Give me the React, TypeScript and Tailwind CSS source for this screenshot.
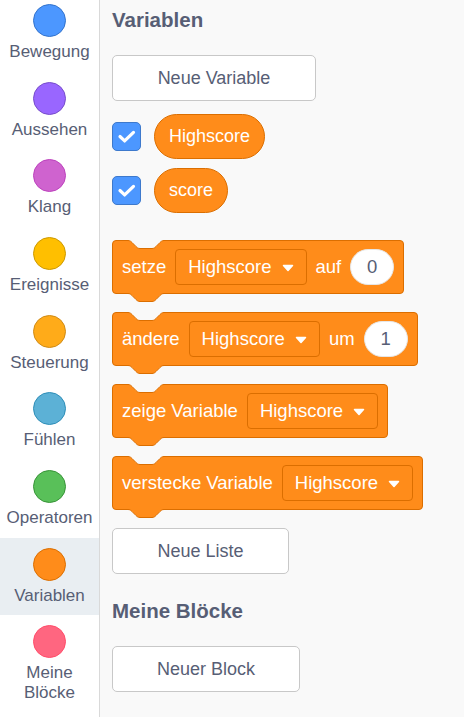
import React from "react";

const FONT = { fontFamily: '"Liberation Sans", Helvetica, Arial, sans-serif' };

const categories = [
  { label: "Bewegung", bg: "bg-[#4c97ff]", border: "border-[#3373cc]" },
  { label: "Aussehen", bg: "bg-[#9966ff]", border: "border-[#774dcb]" },
  { label: "Klang", bg: "bg-[#cf63cf]", border: "border-[#bd42bd]" },
  { label: "Ereignisse", bg: "bg-[#ffbf00]", border: "border-[#cc9900]" },
  { label: "Steuerung", bg: "bg-[#ffab19]", border: "border-[#cf8b17]" },
  { label: "Fühlen", bg: "bg-[#5cb1d6]", border: "border-[#2e8eb8]" },
  { label: "Operatoren", bg: "bg-[#59c059]", border: "border-[#389438]" },
  { label: "Variablen", bg: "bg-[#ff8c1a]", border: "border-[#db6e00]", selected: true },
  { label: "Meine\nBlöcke", bg: "bg-[#ff6680]", border: "border-[#ff4d6a]" },
];

const NOTCH = "c2,0 3,1 4,2 l4,4 c1,1 2,2 4,2 h12 c2,0 3,-1 4,-2 l4,-4 c1,-1 2,-2 4,-2";

function Caret() {
  return (
    <svg width="12" height="8" viewBox="0 0 12 8" className="mt-[2px]">
      <path d="M1.5,1.5 L10.5,1.5 L6,6.5 Z" fill="white" stroke="white" strokeWidth="1.5" strokeLinejoin="round" />
    </svg>
  );
}

function Dropdown() {
  return (
    <div className="flex h-[36px] items-center gap-[10px] rounded-[4px] border border-[#db6e00] bg-[#ff8c1a] pl-[12px] pr-[12px]">
      <span>Highscore</span>
      <Caret />
    </div>
  );
}

function Oval({ v }: { v: string }) {
  return (
    <div className="flex h-[36px] w-[44px] items-center justify-center rounded-full border border-[#e6e6e6] bg-white text-[#575e75]">
      {v}
    </div>
  );
}

function Block({ children }: { children: React.ReactNode }) {
  return (
    <div className="relative flex h-[54px] w-fit items-center gap-[9px] rounded-[4px] border border-[#db6e00] bg-[#ff8c1a] pl-[9px] pr-[9px] text-[18.5px] text-white">
      <svg className="absolute left-[15px] top-[-1px]" width="36" height="10" viewBox="0 0 36 10">
        <path d={`M0,0 L0,0.5 ${NOTCH} L36,0 Z`} fill="#f9f9f9" />
        <path d={`M0,0.5 ${NOTCH}`} fill="none" stroke="#db6e00" strokeWidth="1" />
      </svg>
      <svg className="absolute left-[15px] top-full z-10" width="36" height="10" viewBox="0 0 36 10">
        <path d={`M0,0 L0,0.5 ${NOTCH} L36,0 Z`} fill="#ff8c1a" />
        <path d={`M0,0.5 ${NOTCH}`} fill="none" stroke="#db6e00" strokeWidth="1" />
      </svg>
      {children}
    </div>
  );
}

function Check() {
  return (
    <div className="flex h-[29px] w-[29px] items-center justify-center rounded-[5px] border border-[#3d79cc] bg-[#4c97ff]">
      <svg width="29" height="29" viewBox="0 0 29 29">
        <path d="M7.5,14.5 L12.5,19.3 L22,10" fill="none" stroke="white" strokeWidth="3.4" strokeLinecap="round" strokeLinejoin="round" />
      </svg>
    </div>
  );
}

function Pill({ label }: { label: string }) {
  return (
    <div className="flex h-[45px] items-center rounded-full border border-[#db6e00] bg-[#ff8c1a] px-[14px] text-[18px] text-white">
      {label}
    </div>
  );
}

function Button({ label, w }: { label: string; w: string }) {
  return (
    <div className={`flex h-[46px] items-center justify-center rounded-[5px] border border-[#c8c8c8] bg-white text-[18px] text-[#575e75] ${w}`}>
      {label}
    </div>
  );
}

export default function App() {
  return (
    <div className="flex h-[717px] w-[464px] overflow-hidden bg-[#f9f9f9]" style={FONT}>
      <div className="h-full w-[100px] shrink-0 overflow-hidden border-r border-[#d9d9d9] bg-white">
        <div className="mt-[-6px] flex flex-col">
          {categories.map((c) => (
            <div
              key={c.label}
              className={`flex h-[77.67px] shrink-0 flex-col items-center pt-[10px] ${c.selected ? "bg-[#e9eef2]" : ""}`}
            >
              <div className={`h-[33px] w-[33px] shrink-0 rounded-full border ${c.bg} ${c.border}`} />
              <div className="mt-[5px] whitespace-pre text-center text-[17px] leading-[20px] text-[#575e75]">
                {c.label}
              </div>
            </div>
          ))}
        </div>
      </div>
      <div className="flex flex-1 flex-col pl-[12px]">
        <div className="mt-[8px] text-[20.5px] font-bold leading-[24px] text-[#575e75]">Variablen</div>
        <div className="mt-[23px]">
          <Button label="Neue Variable" w="w-[204px]" />
        </div>
        <div className="mt-[13px] flex items-center gap-[13px]">
          <Check />
          <Pill label="Highscore" />
        </div>
        <div className="mt-[9px] flex items-center gap-[13px]">
          <Check />
          <Pill label="score" />
        </div>
        <div className="mt-[27px] flex flex-col gap-[18px]">
          <Block>
            <span>setze</span>
            <Dropdown />
            <span>auf</span>
            <Oval v="0" />
          </Block>
          <Block>
            <span>ändere</span>
            <Dropdown />
            <span>um</span>
            <Oval v="1" />
          </Block>
          <Block>
            <span>zeige Variable</span>
            <Dropdown />
          </Block>
          <Block>
            <span>verstecke Variable</span>
            <Dropdown />
          </Block>
        </div>
        <div className="mt-[18px]">
          <Button label="Neue Liste" w="w-[177px]" />
        </div>
        <div className="mt-[25px] text-[20.5px] font-bold leading-[24px] text-[#575e75]">Meine Blöcke</div>
        <div className="mt-[23px]">
          <Button label="Neuer Block" w="w-[188px]" />
        </div>
      </div>
    </div>
  );
}
